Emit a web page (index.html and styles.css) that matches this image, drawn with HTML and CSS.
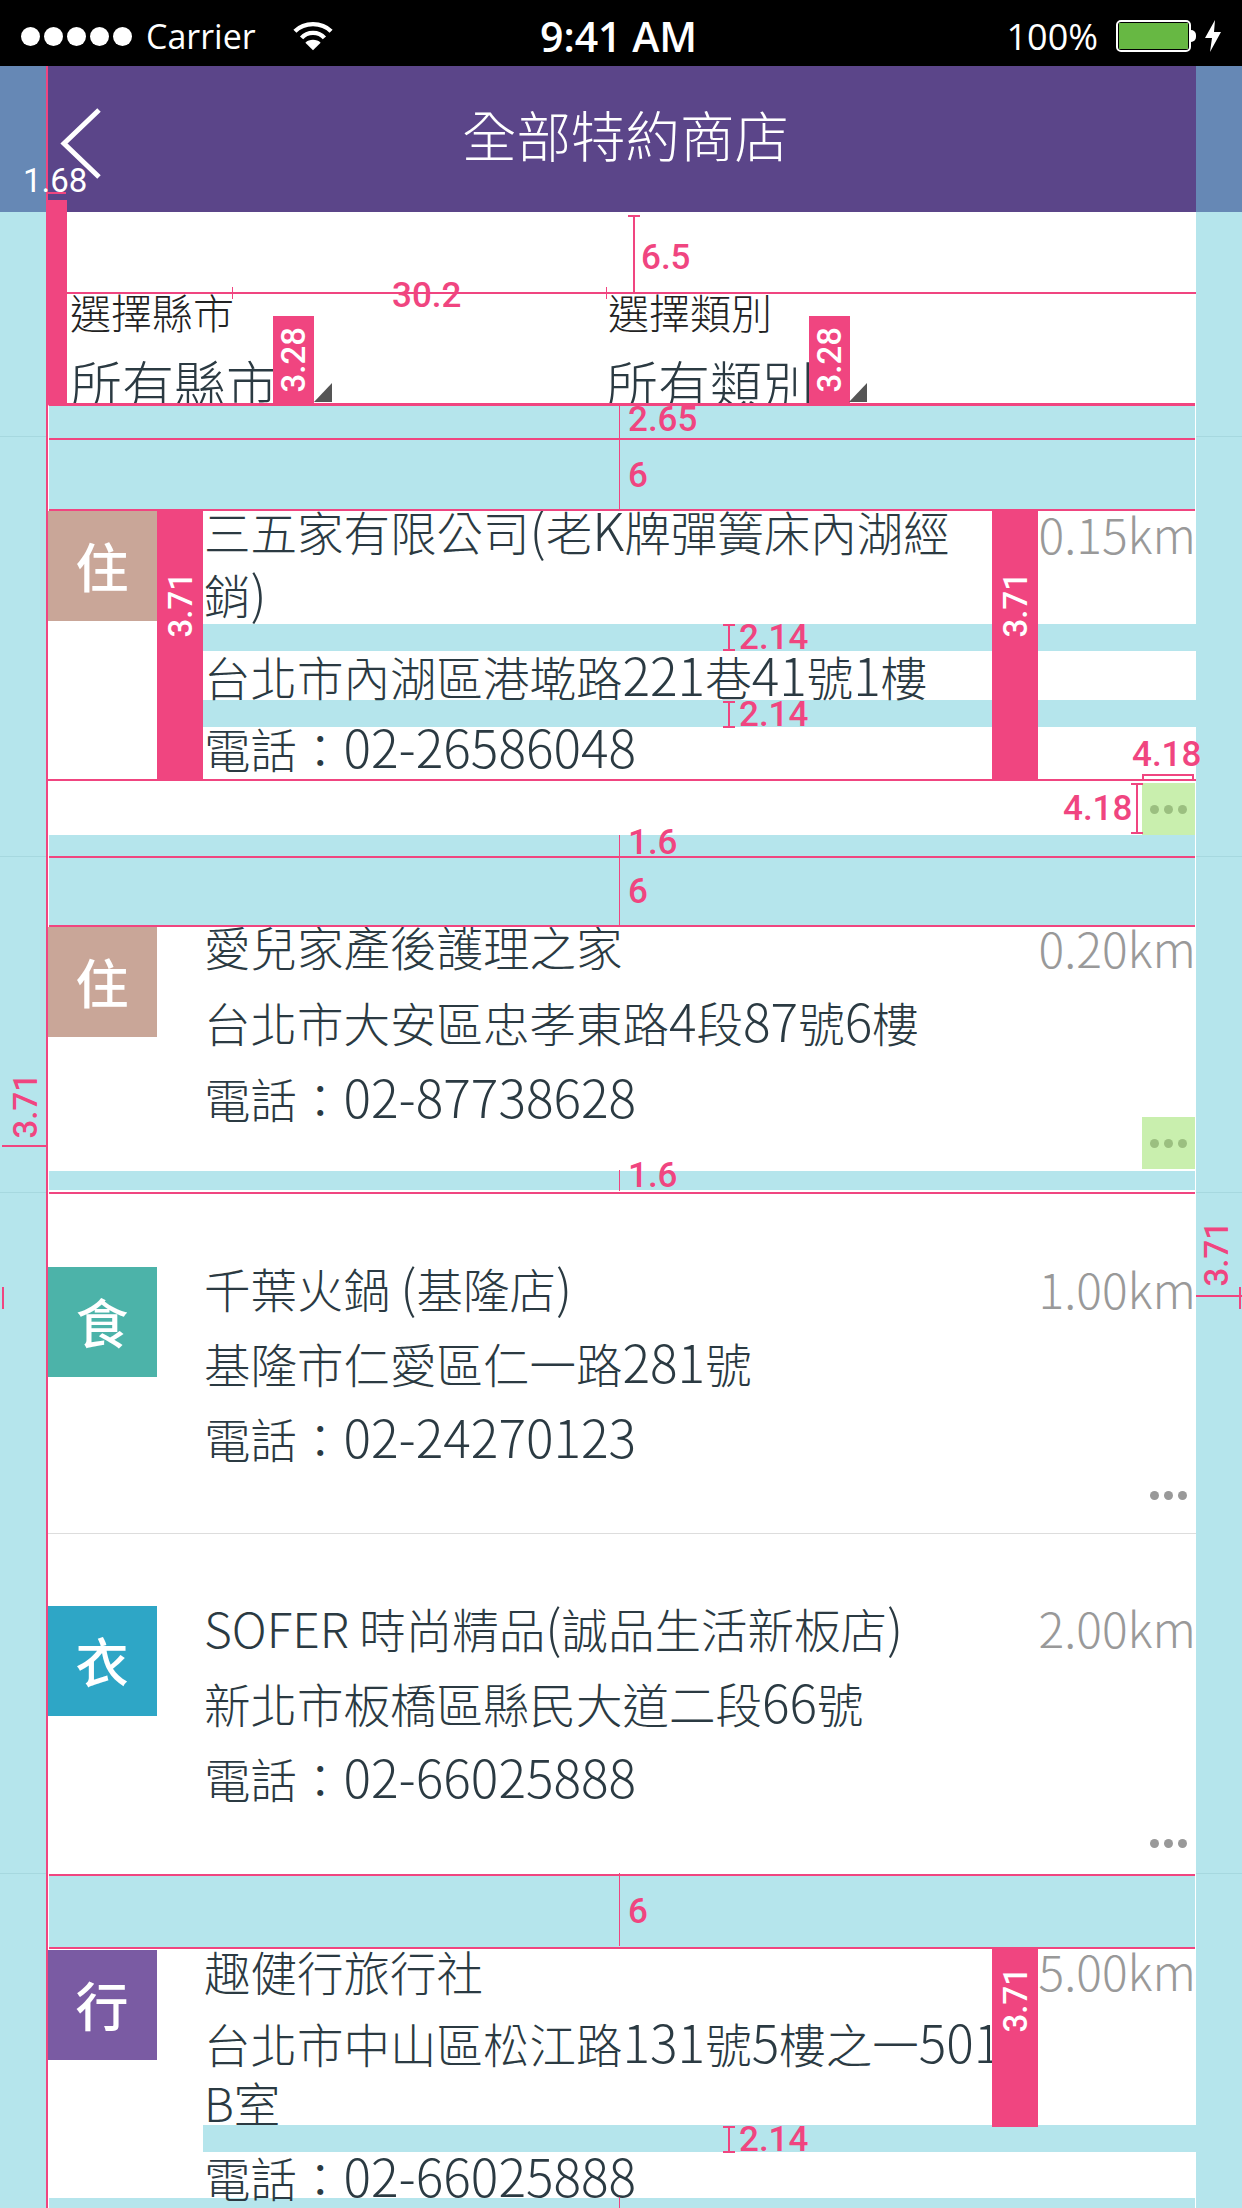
FILE: index.html
```html
<!DOCTYPE html>
<html lang="zh-Hant">
<head>
  <meta charset="UTF-8" />
  <title>全部特約商店</title>
  <link rel="stylesheet" href="styles.css">
</head>
<body>

<div class="statusbar">
  <div class="status-left">
    <span class="signal"><i></i><i></i><i></i><i></i><i></i></span>
    <span class="carrier">Carrier</span>
    <svg class="wifi" width="40" height="32" viewBox="0 0 42 32">
      <path d="M2 11 C12 1 30 1 40 11" fill="none" stroke="#fff" stroke-width="4.5"/>
      <path d="M9 18 C15 11 27 11 33 18" fill="none" stroke="#fff" stroke-width="4.5"/>
      <path d="M21 31 L13 23 C17 19 25 19 29 23 Z" fill="#fff"/>
    </svg>
  </div>
  <div class="time">9:41 AM</div>
  <div class="status-right">
    <span class="percent">100%</span>
    <span class="battery"><i></i></span>
    <span class="battery-nub"></span>
    <svg class="bolt" width="18" height="32" viewBox="0 0 18 32">
      <path d="M11 0 L1 18 H8 L6 32 L17 12 H10 Z" fill="#fff"/>
    </svg>
  </div>
</div>

<div class="screen">
  <div class="seam seam-1"></div>
  <div class="seam seam-2"></div>
  <div class="seam seam-3"></div>
  <div class="seam seam-4"></div>

  <div class="header">
    <div class="header-inner">
      <svg class="back" width="44" height="76" viewBox="0 0 44 76">
        <path d="M40 5 L5 38.500 L40 72" fill="none" stroke="#fff" stroke-width="5"/>
      </svg>
      <div class="title">全部特約商店</div>
    </div>
  </div>

  <div class="column">
    <div class="filter">
      <div class="select select-city">
        <div class="select-label">選擇縣市</div>
        <div class="select-value">所有縣市</div>
        <div class="pinkbar pinkbar-filter"><span>3.28</span></div>
        <div class="corner"></div>
      </div>
      <div class="select select-type">
        <div class="select-label">選擇類別</div>
        <div class="select-value">所有類別</div>
        <div class="pinkbar pinkbar-filter"><span>3.28</span></div>
        <div class="corner"></div>
      </div>
    </div>

    <div class="band band-first"></div>
    <div class="band band-six"></div>

    <div class="store store-1">
      <div class="store-main">
        <div class="tag tag-stay">住</div>
        <div class="pinkbar pinkbar-left"><span>3.71</span></div>
        <div class="info">
          <div class="line name">三五家有限公司<span class="lat">(</span>老<span class="lat">K</span>牌彈簧床內湖經銷<span class="lat">)</span></div>
          <div class="spacer on"></div>
          <div class="line">台北市內湖區港墘路<span class="lat">221</span>巷<span class="lat">41</span>號<span class="lat">1</span>樓</div>
          <div class="spacer on"></div>
          <div class="line">電話：<span class="lat">02-26586048</span></div>
        </div>
        <div class="pinkbar pinkbar-right"><span>3.71</span></div>
        <div class="dist">0.15km</div>
      </div>
      <div class="store-foot"><div class="more hit"><i></i><i></i><i></i></div></div>
    </div>

    <div class="band band-short"></div>
    <div class="band band-six band-six-mid"></div>

    <div class="store store-2">
      <div class="store-main">
        <div class="tag tag-stay">住</div>
        <div class="tag-gap"></div>
        <div class="info">
          <div class="line">愛兒家產後護理之家</div>
          <div class="spacer"></div>
          <div class="line">台北市大安區忠孝東路<span class="lat">4</span>段<span class="lat">87</span>號<span class="lat">6</span>樓</div>
          <div class="spacer"></div>
          <div class="line">電話：<span class="lat">02-87738628</span></div>
        </div>
        <div class="dist">0.20km</div>
      </div>
      <div class="store-foot"><div class="more hit"><i></i><i></i><i></i></div></div>
    </div>

    <div class="band band-thin"></div>
    <div class="rule"></div>

    <div class="store store-3">
      <div class="store-main">
        <div class="tag tag-food">食</div>
        <div class="tag-gap"></div>
        <div class="info">
          <div class="line">千葉火鍋 <span class="lat">(</span>基隆店<span class="lat">)</span></div>
          <div class="spacer"></div>
          <div class="line">基隆市仁愛區仁一路<span class="lat">281</span>號</div>
          <div class="spacer"></div>
          <div class="line">電話：<span class="lat">02-24270123</span></div>
        </div>
        <div class="dist">1.00km</div>
      </div>
      <div class="store-foot"><div class="more"><i></i><i></i><i></i></div></div>
    </div>

    <div class="store store-4">
      <div class="store-main">
        <div class="tag tag-wear">衣</div>
        <div class="tag-gap"></div>
        <div class="info">
          <div class="line"><span class="word">SOFER</span> 時尚精品<span class="lat">(</span>誠品生活新板店<span class="lat">)</span></div>
          <div class="spacer"></div>
          <div class="line">新北市板橋區縣民大道二段<span class="lat">66</span>號</div>
          <div class="spacer"></div>
          <div class="line">電話：<span class="lat">02-66025888</span></div>
        </div>
        <div class="dist">2.00km</div>
      </div>
      <div class="store-foot"><div class="more"><i></i><i></i><i></i></div></div>
    </div>

    <div class="band band-six band-six-last"></div>

    <div class="store store-5">
      <div class="store-main">
        <div class="tag tag-go">行</div>
        <div class="tag-gap"></div>
        <div class="info">
          <div class="line">趣健行旅行社</div>
          <div class="spacer"></div>
          <div class="line addr-wrap">台北市中山區松江路<span class="lat">131</span>號<span class="lat">5</span>樓之一<span class="lat">501</span><br>B室</div>
          <div class="spacer on"></div>
          <div class="line">電話：<span class="lat">02-66025888</span></div>
        </div>
        <div class="pinkbar pinkbar-right"><span>3.71</span></div>
        <div class="dist">5.00km</div>
      </div>
    </div>
    <div class="band band-end"></div>
  </div>

  <!-- redline marks drawn over the screen -->
  <div class="mark edge"></div>
  <div class="mark edge-block"></div>
  <div class="mark edge-cap"></div>
  <div class="num num-white n-168">1.68</div>

  <div class="mark w-line"></div>
  <div class="mark w-tick-a"></div>
  <div class="mark w-tick-b"></div>
  <div class="num n-302">30.2</div>

  <div class="mark h65-line"></div>
  <div class="mark h65-cap"></div>
  <div class="num n-65">6.5</div>

  <div class="mark mid mid-1"></div>
  <div class="num n-265">2.65</div>
  <div class="num n-6a">6</div>
  <div class="mark mid mid-2"></div>
  <div class="num n-16a">1.6</div>
  <div class="num n-6b">6</div>
  <div class="mark mid mid-3"></div>
  <div class="num n-16b">1.6</div>
  <div class="mark mid mid-4"></div>
  <div class="num n-6c">6</div>
  <div class="mark mid mid-5"></div>

  <div class="ibeam ib-1"></div>
  <div class="num n-214a">2.14</div>
  <div class="ibeam ib-2"></div>
  <div class="num n-214b">2.14</div>
  <div class="ibeam ib-3"></div>
  <div class="num n-214c">2.14</div>

  <div class="num n-418a">4.18</div>
  <div class="mark b418-h"></div>
  <div class="mark b418-hl"></div>
  <div class="mark b418-hr"></div>
  <div class="num n-418b">4.18</div>
  <div class="ibeam ib-418"></div>

  <div class="num num-side n-371l">3.71</div>
  <div class="mark s-left"></div>
  <div class="mark s-left-tick"></div>
  <div class="num num-side n-371r">3.71</div>
  <div class="mark s-right"></div>
  <div class="mark s-right-tick"></div>
</div>

</body>
</html>
```

FILE: styles.css
```css
html, body {
  margin: 0;
  padding: 0;
}
body {
  width: 1242px;
  height: 2208px;
  overflow: hidden;
  background: #b5e5ec;
  font-family: "Noto Sans CJK TC", "Noto Sans", sans-serif;
  font-weight: 300;
  color: #2b3a42;
}

/* status bar */
.statusbar {
  height: 66px;
  box-sizing: border-box;
  padding-top: 6px;
  background: #000;
  color: #fff;
  font-family: "Open Sans", sans-serif;
  display: flex;
  align-items: center;
  position: relative;
}
.status-left {
  display: flex;
  align-items: center;
  padding-left: 21px;
}
.signal {
  display: flex;
  gap: 4px;
}
.signal i {
  width: 19px;
  height: 19px;
  border-radius: 50%;
  background: #fff;
}
.carrier {
  font-size: 34px;
  font-weight: 400;
  margin-left: 14px;
  line-height: 60px;
}
.wifi {
  margin-left: 37px;
}
.time {
  position: absolute;
  left: 540px;
  font-size: 41px;
  font-weight: 600;
}
.status-right {
  margin-left: auto;
  display: flex;
  align-items: center;
  padding-right: 20px;
}
.percent {
  font-size: 36px;
  font-weight: 400;
  margin-right: 18px;
}
.battery {
  width: 75px;
  height: 32px;
  box-sizing: border-box;
  border: 2px solid #fff;
  border-radius: 5px;
  padding: 1px;
  display: block;
}
.battery i {
  display: block;
  height: 100%;
  background: #67b843;
}
.battery-nub {
  width: 5px;
  height: 12px;
  background: #fff;
  border-radius: 0 5px 5px 0;
  margin-right: 8px;
}

.screen {
  position: relative;
  height: 2142px;
  overflow: hidden;
}

/* header */
.header {
  height: 146px;
  background: #6688b5;
  padding: 0 46px 0 47px;
}
.header-inner {
  height: 146px;
  background: #5b4589;
  display: flex;
  align-items: center;
  justify-content: center;
  position: relative;
}
.back {
  position: absolute;
  left: 12px;
  top: 39px;
}
.title {
  color: #fff;
  font-size: 54.500px;
  padding-left: 8px;
  line-height: 146px;
  position: relative;
  top: -5px;
}

.column {
  position: relative;
  width: 1149px;
  margin-left: 47px;
  background: #fff;
}

/* filter */
.filter {
  height: 191px;
  overflow: hidden;
  display: flex;
  padding-left: 23px;
  position: relative;
}
.select {
  position: relative;
  width: 536px;
  flex: none;
  height: 191px;
  padding-top: 75px;
  box-sizing: border-box;
}
.select-label {
  font-size: 41px;
  line-height: 48px;
  color: #222;
}
.select-type .select-label {
  padding-left: 2px;
}
.select-value {
  font-size: 52px;
  line-height: 60px;
  margin-top: 18px;
}
.corner {
  position: absolute;
  left: 244px;
  bottom: 1px;
  width: 0;
  height: 0;
  border-left: 18px solid transparent;
  border-bottom: 19px solid #555;
}
.select-type .corner {
  left: 243px;
}

/* pink measure bars */
.pinkbar {
  background: #f04580;
  color: #fff;
  font-family: Roboto, sans-serif;
  font-weight: 500;
  font-size: 33px;
  display: flex;
  justify-content: center;
  flex: none;
}
.pinkbar span {
  writing-mode: vertical-rl;
  transform: rotate(180deg);
  line-height: 1;
}
.pinkbar-filter {
  position: absolute;
  left: 203px;
  bottom: 0;
  width: 41px;
  height: 87px;
  align-items: center;
}
.pinkbar-left {
  width: 46px;
  padding-top: 61px;
  box-sizing: border-box;
  align-items: flex-start;
}
.pinkbar-right {
  position: absolute;
  left: 945px;
  top: 0;
  bottom: 0;
  width: 46px;
  padding-top: 61px;
  box-sizing: border-box;
  align-items: flex-start;
}

/* blue gutters */
.band {
  background: #b5e5ec;
  box-sizing: border-box;
  margin-left: 2px;
  width: 1146px;
}
.band-first {
  height: 35px;
  border-top: 3px solid #f04580;
  margin-left: 0;
  width: 1148px;
  border-left: 2px solid #fff;
}
.band-six {
  height: 73px;
  border-top: 2px solid #f04580;
  border-bottom: 2px solid #f04580;
}
.band-six-mid {
  height: 71px;
}
.band-six-last {
  height: 75px;
}
.band-short {
  height: 21px;
}
.band-thin {
  height: 19px;
}
.band-end {
  height: 20px;
}
.rule {
  height: 2px;
  margin: 2px 0 0 2px;
  width: 1146px;
  background: #f04580;
}

/* stores */
.store-main {
  display: flex;
  position: relative;
  align-items: flex-start;
}
.tag {
  width: 110px;
  height: 110px;
  flex: none;
  color: #fff;
  font-weight: 500;
  font-size: 53px;
  line-height: 108px;
  text-align: center;
}
.tag-stay { background: #c9a698; }
.tag-food { background: #4cb3a9; }
.tag-wear { background: #2ea6c6; }
.tag-go { background: #7a5ba3; }
.tag-gap {
  width: 46px;
  flex: none;
}
.info {
  flex: 1;
  min-width: 0;
}
.line {
  font-size: 46.500px;
  line-height: 49px;
  padding-left: 1px;
  max-width: 789px;
  box-sizing: border-box;
}
.lat {
  font-size: 51.500px;
  line-height: 0;
}
.word {
  font-size: 48px;
  line-height: 0;
}
.spacer {
  height: 26px;
}
.spacer.on {
  height: 27px;
  background: #b5e5ec;
}
.dist {
  position: absolute;
  right: 0;
  top: 0;
  font-size: 48px;
  line-height: 49px;
  color: #999;
}
.store-foot {
  display: flex;
  justify-content: flex-end;
}
.more {
  width: 53px;
  height: 52px;
  display: flex;
  align-items: center;
  justify-content: center;
  gap: 5px;
  margin-right: 1px;
}
.more i {
  width: 9px;
  height: 9px;
  border-radius: 50%;
  background: #999;
}
.more.hit {
  background: #c9efae;
}
.more.hit i {
  background: #9bbf80;
}

.store-1 .store-main {
  height: 268px;
  border-bottom: 2px solid #f04580;
}
.store-1 .pinkbar-left {
  height: 268px;
}
.store-1 .info {
  height: 268px;
  overflow: hidden;
}
.store-1 .name {
  line-height: 63px;
  margin-top: -12px;
  margin-bottom: -1px;
}
.store-1 .info .line:last-child {
  line-height: 41px;
}
.store-1 .dist {
  top: -2px;
}
.store-1 .store-foot {
  height: 54px;
  padding-top: 2px;
  box-sizing: border-box;
}
.store-2 {
  height: 244px;
  overflow: hidden;
}
.store-2 .store-main {
  height: 190px;
}
.store-2 .info {
  margin-top: -6px;
}
.store-2 .spacer {
  height: 27px;
}
.store-2 .dist {
  top: -4px;
}
.store-3 {
  padding-top: 73px;
  height: 340px;
  box-sizing: border-box;
  border-bottom: 1px solid #ddd;
}
.store-3 .store-main {
  height: 202px;
}
.store-3 .info {
  margin-top: -4px;
}
.store-3 .dist {
  top: -3px;
}
.store-4 {
  padding-top: 72px;
  height: 340px;
  box-sizing: border-box;
}
.store-4 .store-main {
  height: 211px;
}
.store-4 .info {
  margin-top: -3px;
}
.store-4 .dist {
  top: -3px;
}
.store-5 .store-main {
  height: 178px;
}
.store-5 {
  height: 249px;
}
.store-5 .pinkbar-right {
  height: 178px;
  bottom: auto;
  padding-top: 18px;
}
.store-5 .tag {
  margin-top: 1px;
}
.store-5 .info {
  margin-top: -3px;
}
.store-5 .addr-wrap {
  line-height: 59px;
  max-width: 810px;
  margin-top: -8px;
  margin-bottom: -6px;
}
.store-5 .dist {
  top: -3px;
}

/* seams on the side strips */
.seam {
  position: absolute;
  left: 0;
  width: 100%;
  height: 1px;
  background: #a6d8df;
}
.seam-1 { top: 370px; }
.seam-2 { top: 790px; }
.seam-3 { top: 1126px; }
.seam-4 { top: 1807px; }

/* redline marks, coordinates are relative to .screen (y minus 66) */
.mark, .num, .ibeam {
  position: absolute;
}
.mark {
  background: #f04580;
}
.num {
  color: #f04580;
  font-family: Roboto, sans-serif;
  font-weight: 500;
  font-size: 35px;
  line-height: 36px;
}
.num-white {
  color: #fff;
  font-weight: 400;
}
.num-side {
  writing-mode: vertical-rl;
  transform: rotate(180deg);
  font-size: 33px;
  line-height: 31px;
}
.edge { left: 46px; top: 0; width: 2px; height: 2142px; }
.edge-block { left: 46px; top: 134px; width: 21px; height: 204px; }
.edge-cap { left: 47px; top: 126px; width: 19px; height: 2px; }
.n-168 { left: 23px; top: 97px; font-size: 33px; }
.w-line { left: 67px; top: 226px; width: 1129px; height: 2px; }
.w-tick-a { left: 232px; top: 221px; width: 1px; height: 12px; }
.w-tick-b { left: 606px; top: 221px; width: 1px; height: 12px; }
.n-302 { left: 392px; top: 212px; }
.h65-line { left: 633px; top: 149px; width: 2px; height: 78px; }
.h65-cap { left: 628px; top: 149px; width: 12px; height: 2px; }
.n-65 { left: 641px; top: 174px; }
.mid { left: 619px; width: 1px; }
.mid-1 { top: 337px; height: 107px; }
.mid-2 { top: 769px; height: 90px; }
.mid-3 { top: 1104px; height: 21px; }
.mid-4 { top: 1807px; height: 73px; }
.mid-5 { top: 2131px; height: 11px; }
.n-265 { left: 628px; top: 336px; }
.n-6a { left: 628px; top: 392px; }
.n-16a { left: 628px; top: 759px; }
.n-6b { left: 628px; top: 808px; }
.n-16b { left: 628px; top: 1092px; }
.n-6c { left: 628px; top: 1828px; }

.ibeam {
  width: 2px;
  background: #f04580;
}
.ibeam::before, .ibeam::after {
  content: "";
  position: absolute;
  left: -5px;
  width: 12px;
  height: 2px;
  background: #f04580;
}
.ibeam::before { top: 0; }
.ibeam::after { bottom: 0; }
.ib-1 { left: 728px; top: 558px; height: 27px; }
.ib-2 { left: 728px; top: 635px; height: 27px; }
.ib-3 { left: 728px; top: 2060px; height: 27px; }
.n-214a { left: 739px; top: 554px; }
.n-214b { left: 739px; top: 631px; }
.n-214c { left: 739px; top: 2056px; }
.n-418a { left: 1132px; top: 671px; }
.b418-h { left: 1142px; top: 708px; width: 52px; height: 2px; }
.b418-hl { left: 1142px; top: 708px; width: 2px; height: 6px; }
.b418-hr { left: 1192px; top: 708px; width: 2px; height: 6px; }
.n-418b { left: 1063px; top: 725px; }
.ib-418 { left: 1136px; top: 717px; height: 51px; }
.n-371l { left: 10px; top: 1007px; }
.s-left { left: 2px; top: 1079px; width: 44px; height: 2px; }
.s-left-tick { left: 2px; top: 1221px; width: 2px; height: 22px; }
.n-371r { left: 1201px; top: 1155px; }
.s-right { left: 1196px; top: 1229px; width: 46px; height: 2px; }
.s-right-tick { left: 1239px; top: 1221px; width: 2px; height: 22px; }
```
